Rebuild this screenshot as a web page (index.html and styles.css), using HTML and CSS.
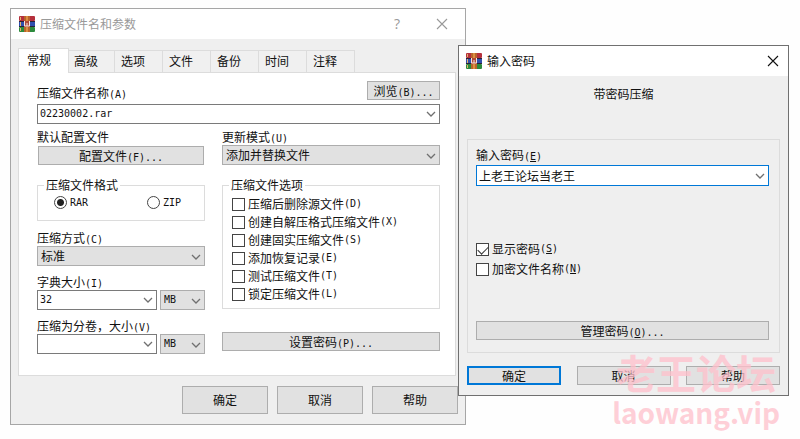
FILE: index.html
```html
<!DOCTYPE html>
<html lang="zh-CN">
<head>
    <meta charset="UTF-8">
    <title>压缩文件名和参数</title>
    <link rel="stylesheet" href="styles.css">
</head>
<body>
    <!-- shared icons -->
    <svg class="defs" aria-hidden="true">
        <symbol id="books" viewBox="0 0 16 16">
            <rect x="0" y="0" width="16" height="5" rx="1" fill="#b5303c"/>
            <rect x="0" y="5" width="16" height="6" rx="1" fill="#2f4fae"/>
            <rect x="0" y="11" width="16" height="5" rx="1" fill="#2c8a3c"/>
            <path d="M0 5.5h16M0 10.5h16" stroke="#2a2238"/>
            <path d="M1.5 1v3M1.5 6v4M1.5 12v3" stroke="#e3b46a"/>
            <rect x="5" y="0" width="6" height="16" fill="#b9642c"/>
            <path d="M8 0v5M8 11v5" stroke="#dc9040" stroke-width="2"/>
            <rect x="5" y="5" width="6" height="6" fill="#b04a38"/>
            <path d="M5.5 5v5h5v-5M8 7v3" fill="none" stroke="#f4e6e0"/>
        </symbol>
        <symbol id="chevron" viewBox="0 0 10 6">
            <path d="M1 1l4 4 4-4" fill="none" stroke="#707070" stroke-width="1.3"/>
        </symbol>
        <symbol id="cross" viewBox="0 0 12 12">
            <path d="M1 1l10 10M11 1L1 11" fill="none" stroke="currentColor" stroke-width="1.1"/>
        </symbol>
    </svg>

    <section class="window archive">
        <header class="titlebar">
            <svg class="logo"><use href="#books"/></svg>
            <h1>压缩文件名和参数</h1>
            <button class="sys" type="button">?</button>
            <button class="sys" type="button" aria-label="关闭"><svg><use href="#cross"/></svg></button>
        </header>

        <nav class="tabs">
            <button class="tab active" type="button">常规</button>
            <button class="tab" type="button">高级</button>
            <button class="tab" type="button">选项</button>
            <button class="tab" type="button">文件</button>
            <button class="tab" type="button">备份</button>
            <button class="tab" type="button">时间</button>
            <button class="tab" type="button">注释</button>
        </nav>

        <form class="panel">
            <div class="name-row">
                <label for="name">压缩文件名称<span class="key">(A)</span></label>
                <button class="push browse" type="button">浏览<span class="key">(B)...</span></button>
            </div>
            <div class="combo">
                <input id="name" class="latin" type="text" value="02230002.rar">
                <button type="button" aria-label="展开"><svg><use href="#chevron"/></svg></button>
            </div>

            <div class="columns">
                <div class="left">
                    <div class="field">
                        <span>默认配置文件</span>
                        <button class="push" type="button">配置文件<span class="key">(F)...</span></button>
                    </div>

                    <fieldset>
                        <legend>压缩文件格式</legend>
                        <div class="formats">
                            <label class="option"><input type="radio" name="format" checked><span class="key">RAR</span></label>
                            <label class="option"><input type="radio" name="format"><span class="key">ZIP</span></label>
                        </div>
                    </fieldset>

                    <div class="field">
                        <label for="method">压缩方式<span class="key">(C)</span></label>
                        <div class="select">
                            <select id="method"><option>标准</option></select>
                            <svg><use href="#chevron"/></svg>
                        </div>
                    </div>

                    <div class="field">
                        <label for="dict">字典大小<span class="key">(I)</span></label>
                        <div class="size">
                            <div class="combo">
                                <input id="dict" class="latin" type="text" value="32">
                                <button type="button" aria-label="展开"><svg><use href="#chevron"/></svg></button>
                            </div>
                            <div class="select">
                                <select class="latin" aria-label="字典单位"><option>MB</option></select>
                                <svg><use href="#chevron"/></svg>
                            </div>
                        </div>
                    </div>

                    <div class="field">
                        <label for="volume">压缩为分卷，大小<span class="key">(V)</span></label>
                        <div class="size">
                            <div class="combo">
                                <input id="volume" class="latin" type="text">
                                <button type="button" aria-label="展开"><svg><use href="#chevron"/></svg></button>
                            </div>
                            <div class="select">
                                <select class="latin" aria-label="分卷单位"><option>MB</option></select>
                                <svg><use href="#chevron"/></svg>
                            </div>
                        </div>
                    </div>
                </div>

                <div class="right">
                    <div class="field">
                        <label for="update">更新模式<span class="key">(U)</span></label>
                        <div class="select">
                            <select id="update"><option>添加并替换文件</option></select>
                            <svg><use href="#chevron"/></svg>
                        </div>
                    </div>

                    <fieldset>
                        <legend>压缩文件选项</legend>
                        <div class="options">
                            <label class="option"><input type="checkbox">压缩后删除源文件<span class="key">(D)</span></label>
                            <label class="option"><input type="checkbox">创建自解压格式压缩文件<span class="key">(X)</span></label>
                            <label class="option"><input type="checkbox">创建固实压缩文件<span class="key">(S)</span></label>
                            <label class="option"><input type="checkbox">添加恢复记录<span class="key">(E)</span></label>
                            <label class="option"><input type="checkbox">测试压缩文件<span class="key">(T)</span></label>
                            <label class="option"><input type="checkbox">锁定压缩文件<span class="key">(L)</span></label>
                        </div>
                    </fieldset>

                    <button class="push set-password" type="button">设置密码<span class="key">(P)...</span></button>
                </div>
            </div>
        </form>

        <footer class="actions">
            <button class="push" type="button">确定</button>
            <button class="push" type="button">取消</button>
            <button class="push" type="button">帮助</button>
        </footer>
    </section>

    <section class="window password">
        <header class="titlebar">
            <svg class="logo"><use href="#books"/></svg>
            <h1>输入密码</h1>
            <button class="sys" type="button" aria-label="关闭"><svg><use href="#cross"/></svg></button>
        </header>

        <form class="password-form">
            <p>带密码压缩</p>
            <div class="group">
                <label for="pwd">输入密码<span class="key">(<u>E</u>)</span></label>
                <div class="combo focused">
                    <input id="pwd" type="text" value="上老王论坛当老王">
                    <button type="button" aria-label="展开"><svg><use href="#chevron"/></svg></button>
                </div>
                <div class="switches">
                    <label class="option"><input type="checkbox" checked>显示密码<span class="key">(<u>S</u>)</span></label>
                    <label class="option"><input type="checkbox">加密文件名称<span class="key">(<u>N</u>)</span></label>
                </div>
                <button class="push" type="button">管理密码<span class="key">(<u>O</u>)...</span></button>
            </div>
            <footer class="confirm">
                <button class="push default" type="button">确定</button>
                <button class="push" type="button">取消</button>
                <button class="push" type="button">帮助</button>
            </footer>
        </form>
    </section>

    <div class="watermark">
        <strong>老王论坛</strong>
        <span>laowang.vip</span>
    </div>
</body>
</html>
```
FILE: styles.css
```css
* {
    box-sizing: border-box;
}
body {
    margin: 0;
    background: #fefefe;
    color: #111;
    font-family: "Noto Sans CJK SC", sans-serif;
    font-size: 12px;
    line-height: 14px;
}
button, input, select {
    margin: 0;
    padding: 0;
    font: inherit;
    color: inherit;
}
h1, p {
    margin: 0;
    font-size: 12px;
    font-weight: normal;
}
.defs {
    display: none;
}
/* half-width latin next to 12px hanzi */
.key, .latin {
    font-family: "DejaVu Sans Mono", monospace;
    font-size: 10px;
}
.key {
    line-height: 10px;
}

/* windows */
.window {
    position: absolute;
    background: #efefef;
    border: 1px solid #a6a6a6;
}
.archive {
    left: 10px;
    top: 8px;
    width: 57%;
}
.password {
    right: 11px;
    top: 45px;
    width: 331px;
    border-color: #707070;
}
.titlebar {
    display: flex;
    align-items: center;
    height: 30px;
    padding: 0 9px 0 8px;
    background: #fff;
}
.titlebar h1 {
    flex: 1;
    margin-left: 5px;
}
.logo {
    width: 16px;
    height: 16px;
}
.sys {
    display: flex;
    justify-content: center;
    width: 28px;
    border: none;
    background: none;
    font-family: "Open Sans", sans-serif;
    font-size: 14px;
}
.sys svg {
    width: 12px;
    height: 12px;
}
.archive .titlebar {
    color: #999;
}
.archive .sys + .sys {
    margin-left: 17px;
}
.password .titlebar {
    padding: 0 1px 0 7px;
}

/* tabs */
.tabs {
    display: flex;
    align-items: flex-end;
    margin: 9px 0 0 7px;
}
.tab {
    width: 48px;
    height: 23px;
    padding: 0 0 1px 6px;
    border: 1px solid #dcdcdc;
    border-left: none;
    background: #f0f0f0;
    text-align: left;
}
.tab.active {
    position: relative;
    width: 51px;
    height: 25px;
    padding: 0 0 3px 8px;
    border-left: 1px solid #dcdcdc;
    border-bottom: none;
    background: #fff;
}
.tab.active + .tab {
    width: 46px;
    padding-left: 5px;
}
.panel {
    margin: -1px 9px 0 7px;
    padding: 8px 15px 21px 18px;
    border: 1px solid #dcdcdc;
    background: #fff;
}

/* controls */
.push {
    height: 19px;
    border: 1px solid #adadad;
    background: #e1e1e1;
    line-height: 14px;
}
.combo {
    display: flex;
    height: 20px;
    border: 1px solid #7a7a7a;
    background: #fff;
}
.combo input {
    flex: 1;
    min-width: 0;
    padding-left: 2px;
    border: none;
    outline: none;
    background: none;
}
.combo button {
    width: 17px;
    border: none;
    background: none;
    line-height: 0;
}
.combo svg, .select svg {
    width: 10px;
    height: 6px;
}
.combo.focused {
    border-color: #0078d7;
}
.select {
    position: relative;
}
.select select {
    display: block;
    width: 100%;
    height: 20px;
    padding-left: 3px;
    border: 1px solid #adadad;
    border-radius: 0;
    background: #e1e1e1;
    appearance: none;
}
.select svg {
    position: absolute;
    right: 4px;
    top: 8px;
    pointer-events: none;
}
fieldset {
    min-width: 0;
    margin: 13px 0 0;
    padding: 0;
    border: 1px solid #dcdcdc;
}
legend {
    margin-left: 6px;
    padding: 0 2px;
}
.option {
    display: flex;
    align-items: center;
}
.option input {
    appearance: none;
    width: 13px;
    height: 13px;
    margin-right: 3px;
    border: 1px solid #444;
    background: #fff;
}
.option input[type="radio"] {
    border-radius: 50%;
}
.option input[type="radio"]:checked {
    background: radial-gradient(circle, #222 3px, #fff 4px);
}
/* tick mark */
.option input[type="checkbox"]:checked::before {
    content: "";
    display: block;
    width: 9px;
    height: 5px;
    margin: 2px 1px;
    border-left: 1px solid #333;
    border-bottom: 1px solid #333;
    transform: rotate(-45deg);
}

/* general tab */
.name-row {
    display: flex;
    justify-content: space-between;
    align-items: flex-end;
    height: 20px;
    margin-bottom: 3px;
}
.name-row label {
    height: 15px;
}
.browse {
    align-self: flex-start;
    width: 73px;
}
.columns {
    display: grid;
    grid-template-columns: minmax(0, 168fr) minmax(0, 218fr);
    gap: 17px;
    margin-top: 6px;
}
.field {
    display: flex;
    flex-direction: column;
    gap: 1px;
}
.field label {
    height: 14px;
}
.field .push {
    margin: 1px 1px 0;
}
fieldset + .field {
    margin-top: 10px;
}
.field + .field {
    margin-top: 9px;
}
.formats {
    display: grid;
    grid-template-columns: 93px 1fr;
    padding: 4px 0 11px 16px;
}
.size {
    display: grid;
    grid-template-columns: 1fr 45px;
    gap: 3px;
}
.size .combo {
    min-width: 0;
}
.options {
    padding: 3px 0 5px 9px;
}
.options .option {
    height: 18px;
}
.set-password {
    width: 100%;
    margin-top: 23px;
}
.actions {
    display: flex;
    justify-content: flex-end;
    gap: 9px;
    padding: 10px 7px;
}
.actions .push {
    width: 86px;
    height: 28px;
}

/* password dialog */
.password-form {
    padding: 11px 8px 10px;
}
.password-form p {
    text-align: center;
}
.group {
    display: flex;
    flex-direction: column;
    margin-top: 38px;
    padding: 8px 10px 12px 8px;
    border: 1px solid #dcdcdc;
}
.group > label {
    height: 14px;
}
.group .combo {
    margin-top: 3px;
    height: 21px;
}
.switches {
    margin: 53px 0 42px;
}
.switches .option {
    height: 20px;
}
.confirm {
    display: flex;
    justify-content: space-between;
    margin-top: 13px;
}
.confirm .push {
    width: 94px;
}
.push.default {
    border: 2px solid #0078d7;
}

.watermark {
    position: absolute;
    right: 20px;
    top: 350px;
    display: flex;
    flex-direction: column;
    align-items: center;
    color: #ffc0cb;
    opacity: 0.75;
    font-size: 40px;
    font-weight: bold;
    line-height: 44px;
    pointer-events: none;
}
.watermark strong {
    font-weight: bold;
}
.watermark span {
    font-size: 28px;
    line-height: 36px;
}
```
